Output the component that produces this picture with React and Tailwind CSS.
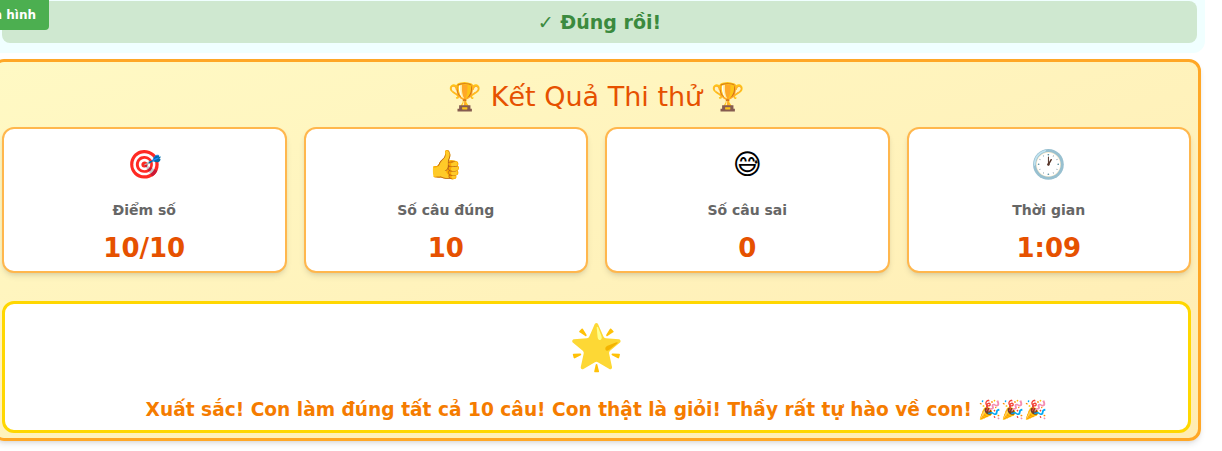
const stats = [
  { icon: "🎯", label: "Điểm số", value: "10/10" },
  { icon: "👍", label: "Số câu đúng", value: "10" },
  { icon: "😅", label: "Số câu sai", value: "0" },
  { icon: "🕐", label: "Thời gian", value: "1:09" },
];

export default function App() {
  return (
    <div
      className="relative w-[1222px] h-[451px] overflow-hidden bg-white"
      style={{ fontFamily: '"DejaVu Sans", "Liberation Sans", sans-serif' }}
    >
      {/* Feedback banner */}
      <div className="w-[1205px] bg-[#f0ffff] rounded-br-xl pt-px pb-[10px] pl-[2px] pr-[8px]">
        <div className="h-[42px] rounded-lg bg-[#cfe8d0] flex items-center justify-center">
          <span className="text-[19px] font-bold text-[#3b8a3e]">✓ Đúng rồi!</span>
        </div>
      </div>

      {/* Clipped button at top left */}
      <div className="absolute left-0 top-0 w-[49px] h-[30px] overflow-hidden rounded-br bg-[#4caf50] flex items-center justify-end">
        <span className="whitespace-nowrap pr-[13px] text-[12px] font-bold text-white">
          Màn hình
        </span>
      </div>

      {/* Result panel */}
      <div className="mt-[6px] ml-[-8px] w-[1209px] rounded-xl border-[3px] border-[#ffa726] bg-gradient-to-br from-[#fff9c4] to-[#ffecb3] px-[7px] pt-[17px] pb-[5px] shadow-md">
        <h2 className="text-center text-[27px] leading-[36px] text-[#e65100]">
          🏆 Kết Quả Thi thử 🏆
        </h2>

        <div className="mt-[12px] grid grid-cols-4 gap-[17px]">
          {stats.map((s) => (
            <div
              key={s.label}
              className="h-[146px] rounded-xl border-2 border-[#ffb74d] bg-white shadow-md flex flex-col items-center pt-[18px]"
            >
              <div className="text-[28px] leading-[36px] text-black">{s.icon}</div>
              <div className="mt-[17px] text-[14px] leading-[20px] font-bold text-[#666]">
                {s.label}
              </div>
              <div className="mt-[10px] text-[26px] leading-[36px] font-bold text-[#e65100]">
                {s.value}
              </div>
            </div>
          ))}
        </div>

        <div className="mt-[28px] h-[132px] rounded-xl border-[3px] border-[#ffd700] bg-white flex flex-col items-center pt-[19px]">
          <div className="text-[44px] leading-[48px] text-black">🌟</div>
          <div className="mt-[25px] text-[18.6px] leading-[28px] font-bold text-[#f57c00]">
            Xuất sắc! Con làm đúng tất cả 10 câu! Con thật là giỏi! Thầy rất tự hào về con! 🎉🎉🎉
          </div>
        </div>
      </div>
    </div>
  );
}
